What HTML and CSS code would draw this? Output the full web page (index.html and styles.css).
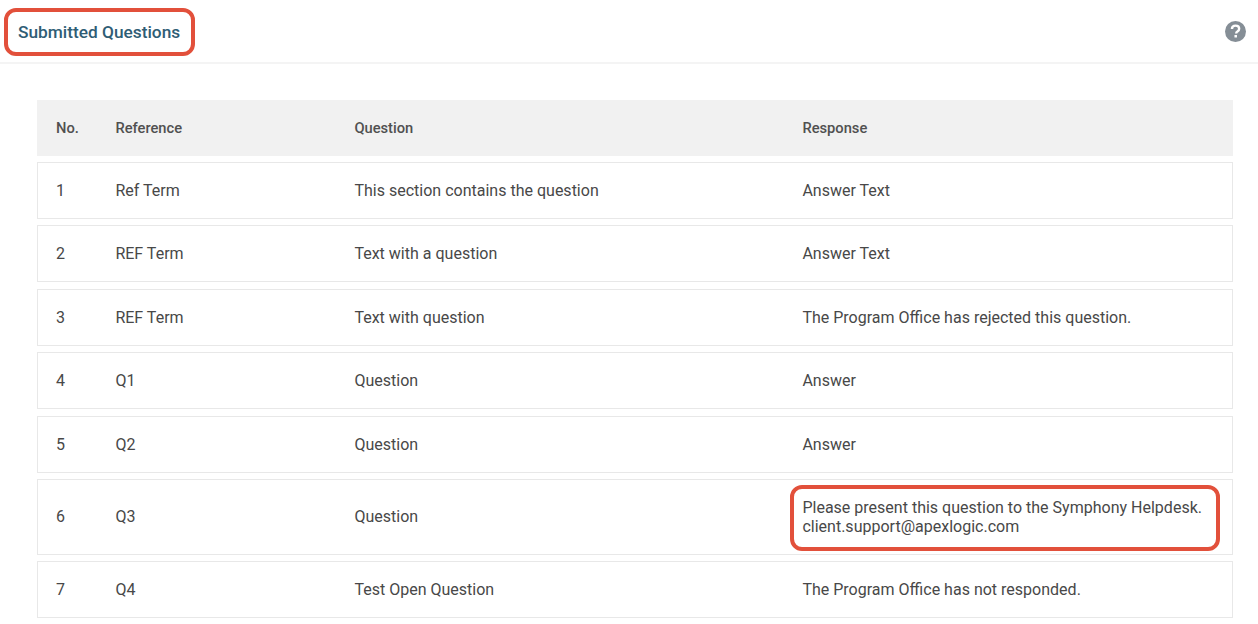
FILE: index.html
```html
<!DOCTYPE html>
<html lang="en">
<head>
<meta charset="utf-8">
<title>Submitted Questions</title>
<link rel="stylesheet" href="styles.css">
</head>
<body>
<header class="topbar">
  <h1 class="title">Submitted Questions</h1>
  <svg class="help" viewBox="0 0 20 20" width="21" height="21" aria-hidden="true">
    <circle cx="10" cy="10" r="10" fill="#858e96"/>
    <path d="M6.6 7.6c0-2 1.5-3.2 3.5-3.2 2 0 3.4 1.2 3.4 2.9 0 1.3-.7 2-1.7 2.7-.8.5-1.1.9-1.1 1.7v.3" fill="none" stroke="#fff" stroke-width="2.3"/>
    <rect x="9" y="13.3" width="2.4" height="2.4" fill="#fff"/>
  </svg>
</header>
<main class="content">
  <div class="row head">
    <div>No.</div><div>Reference</div><div>Question</div><div>Response</div>
  </div>
  <div class="row"><div>1</div><div>Ref Term</div><div>This section contains the question</div><div>Answer Text</div></div>
  <div class="row"><div>2</div><div>REF Term</div><div>Text with a question</div><div>Answer Text</div></div>
  <div class="row"><div>3</div><div>REF Term</div><div>Text with question</div><div>The Program Office has rejected this question.</div></div>
  <div class="row"><div>4</div><div>Q1</div><div>Question</div><div>Answer</div></div>
  <div class="row"><div>5</div><div>Q2</div><div>Question</div><div>Answer</div></div>
  <div class="row tall"><div>6</div><div>Q3</div><div>Question</div><div>Please present this question to the Symphony Helpdesk.<br>client.support@apexlogic.com</div></div>
  <div class="row"><div>7</div><div>Q4</div><div>Test Open Question</div><div>The Program Office has not responded.</div></div>
</main>
<div class="callout callout-title"></div>
<div class="callout callout-response"></div>
</body>
</html>
```
FILE: styles.css
```css
* { box-sizing: border-box; }
html, body { margin: 0; padding: 0; }
body {
  width: 1258px;
  height: 624px;
  overflow: hidden;
  background: #fff;
  font-family: Roboto, "Liberation Sans", sans-serif;
  color: #484848;
  position: relative;
}
.topbar {
  height: 64px;
  padding: 1px 12px 0 18px;
  display: flex;
  align-items: center;
  justify-content: space-between;
  border-bottom: 2px solid #f4f4f4;
}
.title {
  margin: 0;
  font-size: 17.3px;
  font-weight: 500;
  color: #2f5d75;
}
.help { display: block; }
.content {
  padding: 36px 25px 0 37px;
  display: flex;
  flex-direction: column;
  gap: 6.4px;
}
.row {
  display: grid;
  grid-template-columns: 59.4px 239px 448px 1fr;
  align-items: center;
  height: 57px;
  padding: 0 18px;
  border: 1px solid #e8e8e8;
  font-size: 16.03px;
  line-height: 19px;
}
.row.head {
  height: 55.6px;
  padding-top: 1px;
  background: #f1f1f1;
  border-color: #f1f1f1;
  font-size: 14.7px;
  font-weight: 500;
  color: #505050;
}
.row.tall { height: 76px; }
.callout {
  position: absolute;
  border: 4px solid #e2503b;
  border-radius: 12px;
}
.callout-title { left: 4px; top: 8px; width: 191px; height: 48px; }
.callout-response { left: 790px; top: 485px; width: 430px; height: 66px; }
```
